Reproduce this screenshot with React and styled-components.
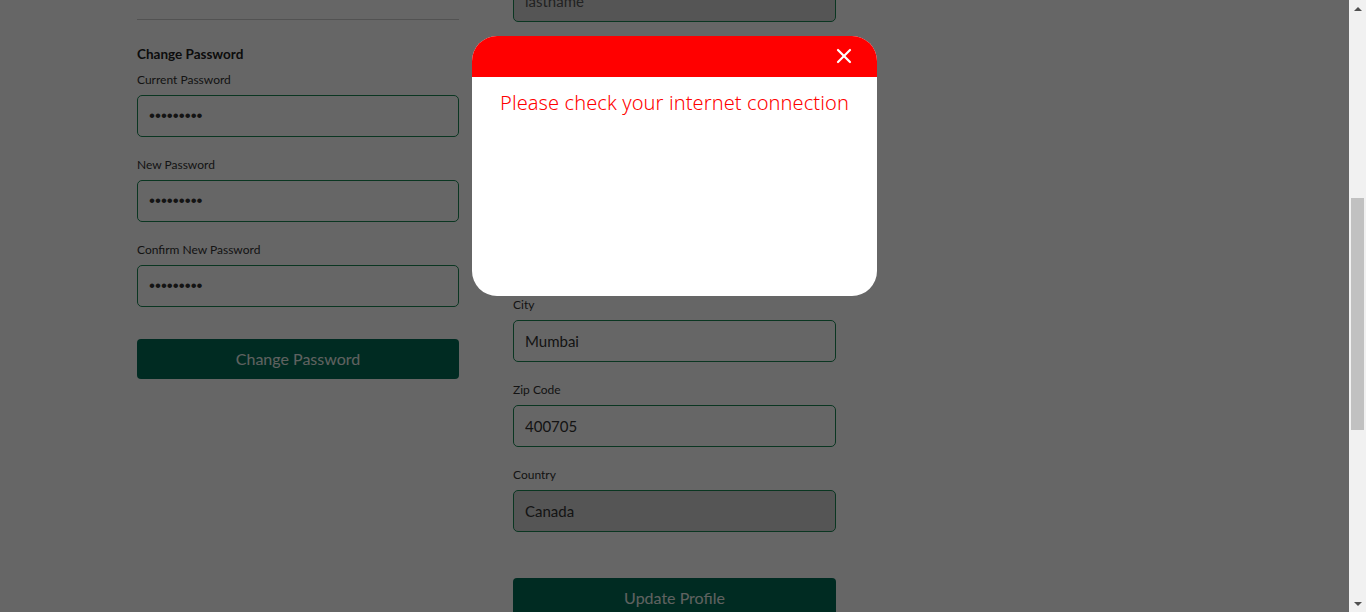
import { useLayoutEffect, useRef } from "react"
import styled, { createGlobalStyle } from "styled-components"
import { X } from "lucide-react"

const SCROLL_TOP = 477
const TRACK = 578
const DOC_HEIGHT = 1525

const Global = createGlobalStyle`
  html, body {
    margin: 0;
    padding: 0;
    background: #ffffff;
    font-family: Lato, "Open Sans", sans-serif;
    overflow: hidden;
  }
  * { box-sizing: border-box; }
`

const Shell = styled.div`
  display: flex;
  height: 100vh;
`

const Viewport = styled.div`
  position: relative;
  flex: 1;
  min-width: 0;
`

const Scroller = styled.div`
  height: 100%;
  overflow-y: auto;
  scrollbar-width: none;
  &::-webkit-scrollbar { display: none; }
`

const ScrollBar = styled.div`
  width: 17px;
  background: #f1f1f1;
  display: flex;
  flex-direction: column;
`

const Arrow = styled.div`
  height: 17px;
  display: flex;
  justify-content: center;
  align-items: center;
  &::before {
    content: "";
    border-left: 4px solid transparent;
    border-right: 4px solid transparent;
    ${p => (p.$down ? "border-top: 4px solid #505050;" : "border-bottom: 4px solid #505050;")}
  }
`

const Track = styled.div`
  flex: 1;
  padding: 0 2px;
`

const Thumb = styled.div`
  background: #c1c1c1;
`

const TopBar = styled.header`
  height: 70px;
  background: #006c55;
  color: #fff;
  display: flex;
  align-items: center;
  padding: 0 137px;
  font-size: 22px;
  font-weight: 700;
`

const Main = styled.main`
  padding: 165px 0 130px 137px;
  display: flex;
  gap: 54px;
`

const Column = styled.section`
  width: ${p => p.$w}px;
  padding-top: ${p => p.$pad || 0}px;
  display: flex;
  flex-direction: column;
`

const ProfileBlock = styled.div`
  height: 237px;
  display: flex;
  flex-direction: column;
  align-items: center;
  gap: 12px;
  padding-top: 20px;
`

const Avatar = styled.div`
  width: 120px;
  height: 120px;
  border-radius: 50%;
  background: #d4d4d4;
`

const Name = styled.div`
  font-size: 16px;
  font-weight: 700;
  color: #222;
`

const Divider = styled.hr`
  margin: 24px 0 24px;
  border: none;
  border-top: 1px solid #cccccc;
  height: 0;
`

const SectionTitle = styled.h3`
  margin: 0 0 7px;
  font-size: 13.5px;
  line-height: 20px;
  font-weight: 700;
  color: #222;
`

const Field = styled.div`
  display: flex;
  flex-direction: column;
  gap: 6px;
  margin-bottom: 19px;
`

const Label = styled.label`
  font-size: 12px;
  line-height: 18px;
  color: #333;
`

const Input = styled.input`
  height: 42px;
  width: 100%;
  border: 1px solid #198754;
  border-radius: 5px;
  padding: 0 11px;
  font-family: ${p => (p.type === "password" ? '"Liberation Sans", Arial' : 'Lato, "Open Sans"')}, sans-serif;
  font-size: ${p => (p.type === "password" ? 17 : 15)}px;
  color: #333;
  background: ${p => (p.disabled ? "#d4d4d4" : "#ffffff")};
  outline: none;
  &::placeholder { color: #555; }
`

const Button = styled.button`
  height: 40px;
  width: 100%;
  margin-top: ${p => p.$top}px;
  padding: 0 0 2px;
  border: none;
  border-radius: 4px;
  background: #006c55;
  color: #eef4f1;
  font-family: Lato, "Open Sans", sans-serif;
  font-size: 16px;
  cursor: pointer;
`

const Footer = styled.footer`
  height: 300px;
  background: #f4f4f4;
`

const Overlay = styled.div`
  position: absolute;
  inset: 0;
  background: rgba(0, 0, 0, 0.6);
  display: flex;
  justify-content: center;
  align-items: flex-start;
  padding-top: 36px;
`

const Modal = styled.div`
  width: 405px;
  height: 260px;
  background: #ffffff;
  border-radius: 25px;
  overflow: hidden;
`

const ModalHead = styled.div`
  height: 41px;
  background: #ff0000;
  display: flex;
  justify-content: flex-end;
  align-items: center;
  padding: 0 21px 2px 0;
`

const Close = styled.button`
  border: none;
  background: none;
  padding: 0;
  display: flex;
  color: #fff;
  cursor: pointer;
`

const Message = styled.p`
  margin: 13px 0 0;
  text-align: center;
  color: #ff0000;
  font-family: "Noto Sans", sans-serif;
  font-size: 20px;
  font-weight: 300;
  line-height: 26px;
  letter-spacing: 0.1px;
`

function FormField({ label, ...rest }) {
  return (
    <Field>
      <Label>{label}</Label>
      <Input {...rest} />
    </Field>
  )
}

export default function App() {
  const scroller = useRef(null)

  useLayoutEffect(() => {
    if (scroller.current) scroller.current.scrollTop = SCROLL_TOP
  }, [])

  const viewH = 612
  const thumbH = Math.round((viewH / DOC_HEIGHT) * TRACK)
  const thumbTop = Math.round((SCROLL_TOP / DOC_HEIGHT) * TRACK)

  return (
    <>
      <Global />
      <Shell>
        <Viewport>
          <Scroller ref={scroller}>
            <TopBar>My Account</TopBar>
            <Main>
              <Column $w={322}>
                <ProfileBlock>
                  <Avatar />
                  <Name>Firstname Lastname</Name>
                </ProfileBlock>
                <Divider />
                <SectionTitle>Change Password</SectionTitle>
                <FormField label="Current Password" type="password" defaultValue="123456789" />
                <FormField label="New Password" type="password" defaultValue="123456789" />
                <FormField label="Confirm New Password" type="password" defaultValue="123456789" />
                <Button $top={13}>Change Password</Button>
              </Column>
              <Column $w={323} $pad={1}>
                <SectionTitle>Personal Information</SectionTitle>
                <FormField label="Username" defaultValue="user01" disabled />
                <FormField label="First Name" placeholder="firstname" />
                <FormField label="Last Name" placeholder="lastname" disabled />
                <FormField label="Email" defaultValue="user@example.com" />
                <FormField label="Phone" defaultValue="9876543210" />
                <FormField label="Address" defaultValue="Andheri East" />
                <FormField label="City" defaultValue="Mumbai" />
                <FormField label="Zip Code" defaultValue="400705" />
                <FormField label="Country" defaultValue="Canada" disabled />
                <Button $top={27}>Update Profile</Button>
              </Column>
            </Main>
            <Footer />
          </Scroller>
          <Overlay>
            <Modal>
              <ModalHead>
                <Close aria-label="close">
                  <X size={24} strokeWidth={2.2} />
                </Close>
              </ModalHead>
              <Message>Please check your internet connection</Message>
            </Modal>
          </Overlay>
        </Viewport>
        <ScrollBar>
          <Arrow />
          <Track>
            <Thumb style={{ marginTop: thumbTop, height: thumbH }} />
          </Track>
          <Arrow $down />
        </ScrollBar>
      </Shell>
    </>
  )
}
